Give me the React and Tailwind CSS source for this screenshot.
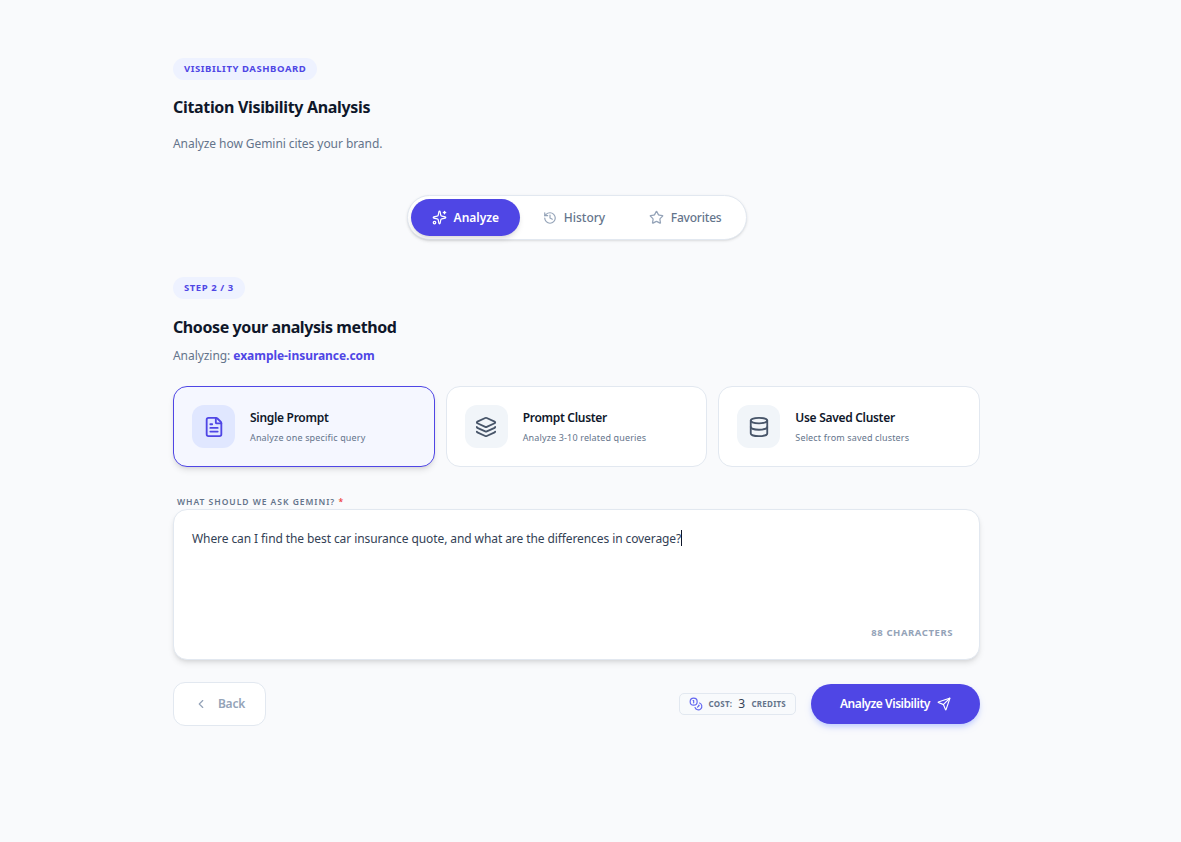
import { Sparkles, History, Star, FileText, Layers, Database, ChevronLeft, Coins, Send } from "lucide-react";

const methods = [
  { title: "Single Prompt", desc: "Analyze one specific query", Icon: FileText, active: true },
  { title: "Prompt Cluster", desc: "Analyze 3-10 related queries", Icon: Layers },
  { title: "Use Saved Cluster", desc: "Select from saved clusters", Icon: Database },
];

const Badge = ({ children }) => (
  <div className="flex h-[22px] w-fit items-center rounded-full bg-[#eef2ff] px-[11px] text-[9.5px] font-bold uppercase tracking-[0.06em] text-[#4f46e5]">
    {children}
  </div>
);

export default function App() {
  const question = "Where can I find the best car insurance quote, and what are the differences in coverage?";

  return (
    <div className="min-h-[842px] bg-[#f9fafc] pl-[173px] pr-[201px] pt-[58px] font-['Noto_Sans',sans-serif] text-[#0f172a]">
      <Badge>Visibility Dashboard</Badge>
      <h1 className="mt-[15px] text-[16px] leading-[24px] font-bold tracking-[-0.33px]">Citation Visibility Analysis</h1>
      <p className="mt-[15px] text-[12px] leading-[20px] tracking-[-0.06px] text-[#64748b]">Analyze how Gemini cites your brand.</p>

      <div className="mt-[41px] flex justify-center">
        <div className="flex h-[45px] w-[340px] items-center rounded-full border border-[#e2e8f0] bg-white px-[3px] shadow-sm">
          <button className="flex h-[37px] w-[110px] items-center justify-center gap-[7px] rounded-full bg-[#4f46e5] text-[12px] font-semibold text-white shadow-md">
            <Sparkles size={15} strokeWidth={2} />
            Analyze
          </button>
          <button className="flex h-[36px] w-[108px] items-center justify-center gap-[7px] text-[12px] font-medium text-[#64748b]">
            <History size={14} className="text-[#94a3b8]" />
            History
          </button>
          <button className="flex h-[36px] w-[115px] items-center justify-center gap-[7px] text-[12px] font-medium tracking-[-0.2px] text-[#64748b]">
            <Star size={15} className="text-[#94a3b8]" />
            Favorites
          </button>
        </div>
      </div>

      <div className="mt-[37px]">
        <Badge>Step 2 / 3</Badge>
      </div>
      <h2 className="mt-[16px] text-[16px] leading-[24px] font-bold tracking-[-0.4px]">Choose your analysis method</h2>
      <p className="mt-[7px] text-[12px] leading-[20px] tracking-[-0.05px] text-[#64748b]">
        Analyzing: <span className="font-bold text-[#4f46e5]">example-insurance.com</span>
      </p>

      <div className="mt-[20px] grid grid-cols-3 gap-[11px]">
        {methods.map(({ title, desc, Icon, active }) => (
          <div
            key={title}
            className={
              active
                ? "flex h-[81px] items-center gap-[15px] rounded-[14px] border border-[#4f46e5] bg-[#f5f7ff] pl-[18px] shadow-md"
                : "flex h-[81px] items-center gap-[15px] rounded-[14px] border border-[#e2e8f0] bg-white pl-[18px]"
            }
          >
            <div
              className={
                active
                  ? "flex h-[43px] w-[43px] items-center justify-center rounded-[12px] bg-[#e0e7ff] text-[#4f46e5]"
                  : "flex h-[43px] w-[43px] items-center justify-center rounded-[12px] bg-[#f1f5f9] text-[#475569]"
              }
            >
              <Icon size={22} />
            </div>
            <div>
              <div className="text-[12px] leading-[18px] font-semibold tracking-[-0.3px]">{title}</div>
              <div className="mt-[4px] text-[9px] leading-[14px] tracking-[0.15px] text-[#64748b]">{desc}</div>
            </div>
          </div>
        ))}
      </div>

      <label className="mt-[28px] block pl-[4px] text-[8.5px] leading-[14px] font-semibold uppercase tracking-[0.115em] text-[#64748b]">
        What should we ask Gemini? <span className="text-[#ef4444]">*</span>
      </label>
      <div className="relative h-[151px] rounded-[14px] border border-[#e2e8f0] bg-white shadow-md">
        <div className="px-[18px] pt-[17px] text-[12px] leading-[20px] tracking-[-0.09px] text-[#334155]">
          {question}
          <span className="inline-block h-[16px] w-px translate-y-[3px] bg-[#0f172a]"></span>
        </div>
        <span className="absolute right-[26px] bottom-[19px] text-[9.5px] font-bold uppercase tracking-[0.06em] text-[#94a3b8]">
          88 characters
        </span>
      </div>

      <div className="mt-[22px] flex items-center justify-between">
        <button className="flex h-[44px] w-[93px] items-center justify-center gap-[10px] rounded-[12px] border border-[#e2e8f0] bg-white text-[12px] font-semibold tracking-[-0.2px] text-[#94a3b8]">
          <ChevronLeft size={14} />
          Back
        </button>
        <div className="flex items-center gap-[15px]">
          <div className="flex h-[22px] items-center gap-[6px] rounded-[5px] border border-[#e2e8f0] bg-[#f8fafc] px-[9px] text-[8px] font-bold uppercase tracking-[0.03em] text-[#64748b]">
            <Coins size={14} className="text-[#6366f1]" />
            <span>Cost:</span>
            <span className="text-[12px] font-normal text-[#334155]">3</span>
            <span>Credits</span>
          </div>
          <button className="flex h-[40px] w-[169px] items-center justify-center gap-[7px] rounded-full bg-[#4f46e5] text-[12px] font-semibold tracking-[-0.45px] text-white shadow-md shadow-indigo-200">
            Analyze Visibility
            <Send size={14} />
          </button>
        </div>
      </div>
    </div>
  );
}
